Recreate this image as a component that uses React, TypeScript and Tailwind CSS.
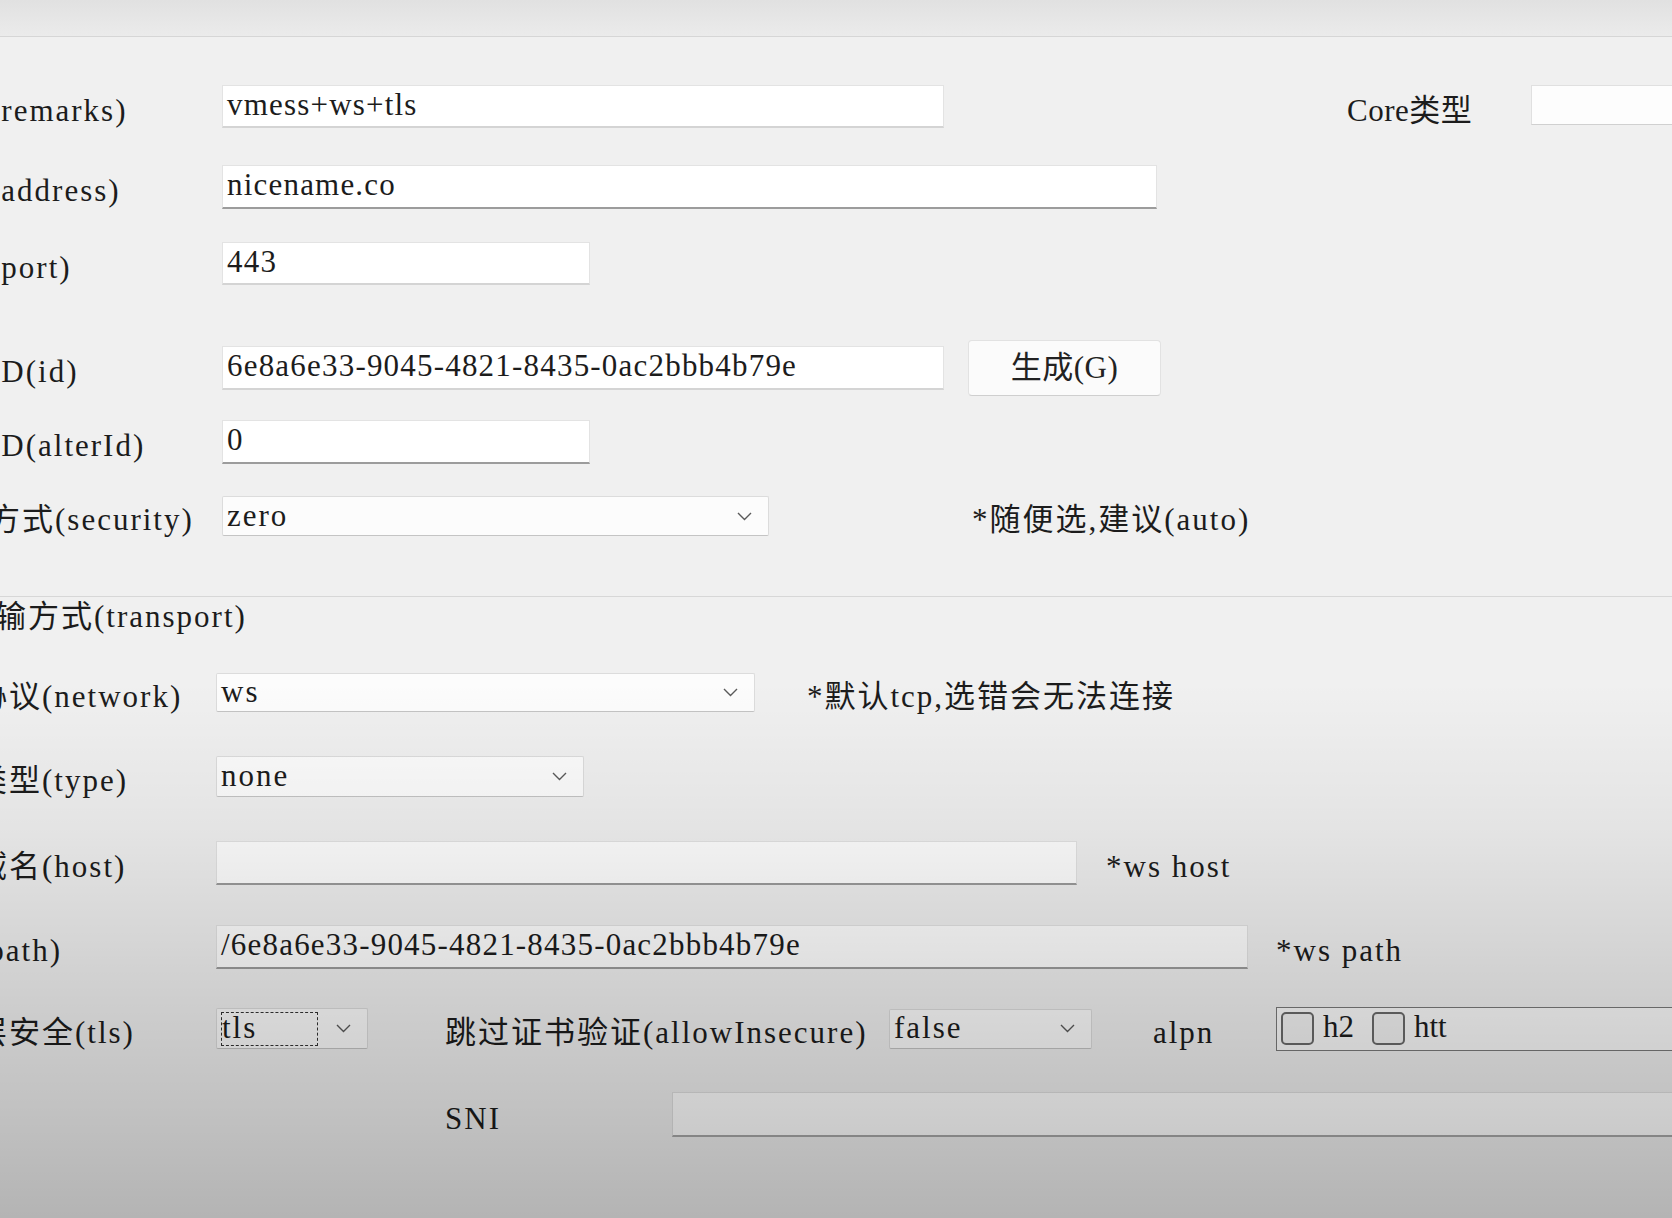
import type { ReactNode } from 'react'

// v2rayN style server editor, cropped at the left edge
const FONT = "font-['Liberation_Serif','Noto_Sans_CJK_SC',serif]"

function Chevron() {
  return (
    <svg width="15" height="9" viewBox="0 0 15 9" className="shrink-0">
      <polyline points="1,1 7.5,7.5 14,1" fill="none" stroke="#5a5a5a" strokeWidth="1.4" />
    </svg>
  )
}

function TextBox({ className, value, dark }: { className: string; value?: string; dark?: boolean }) {
  return (
    <div
      className={`${className} shrink-0 flex items-center bg-white border border-[#e3e3e3] pl-[4px] pb-[2px] tracking-[1.2px] whitespace-nowrap overflow-hidden ${
        dark ? 'border-b-2 border-b-[#9c9c9c]' : 'border-b-2 border-b-[#d4d4d4]'
      }`}
    >
      {value}
    </div>
  )
}

function Select({ className, value, focused }: { className: string; value: string; focused?: boolean }) {
  return (
    <div className={`${className} shrink-0 flex items-center justify-between bg-[#fcfcfc] border border-[#dcdcdc] border-b-[#c4c4c4] rounded-[2px] pl-[4px] pr-[16px]`}>
      {focused ? (
        <span className="border border-dashed border-[#333] h-[34px] w-[97px] flex items-center leading-none pb-[2px]">{value}</span>
      ) : (
        <span className="leading-none pb-[2px]">{value}</span>
      )}
      <Chevron />
    </div>
  )
}

function Label({ children, wide }: { children: ReactNode; wide?: boolean }) {
  return (
    <div className={`${wide ? 'w-[306px]' : 'w-[299px]'} shrink-0 pt-[8px] leading-[36px] whitespace-nowrap`}>
      {children}
    </div>
  )
}

function Checkbox({ label }: { label: string }) {
  return (
    <div className="flex items-center tracking-normal">
      <span className="w-[33px] h-[33px] rounded-[5px] border-2 border-[#6a6a6a] bg-[#f3f3f3]" />
      <span className="ml-[9px] leading-none pb-[4px]">{label}</span>
    </div>
  )
}

export default function App() {
  return (
    <div className={`relative w-[1672px] h-[1218px] overflow-hidden bg-[#f0f0f0] text-[#1c1c1c] text-[31px] tracking-[2px] ${FONT}`}>
      <div className="h-[37px] bg-gradient-to-b from-[#e1e1e1] to-[#ebebeb] border-b border-[#d6d6d6]" />

      {/* main fields */}
      <div className="ml-[-77px]">
        <div className="mt-[48px] h-[43px] flex items-center">
          <Label>别名(remarks)</Label>
          <TextBox className="w-[722px] h-[43px]" value="vmess+ws+tls" />
          <div className="ml-[403px] w-[184px] shrink-0 pt-[8px] leading-[36px] tracking-[0.5px] whitespace-nowrap">Core类型</div>
          <div className="w-[220px] h-[40px] shrink-0 mb-[4px] bg-[#fdfdfd] border border-[#e0e0e0] border-b-[#d0d0d0]" />
        </div>

        <div className="mt-[37px] h-[44px] flex items-center">
          <Label>地址(address)</Label>
          <TextBox className="w-[935px] h-[44px]" value="nicename.co" dark />
        </div>

        <div className="mt-[33px] h-[43px] flex items-center">
          <Label>端口(port)</Label>
          <TextBox className="w-[368px] h-[43px]" value="443" />
        </div>

        <div className="mt-[55px] h-[56px] flex items-center">
          <Label>用户ID(id)</Label>
          <TextBox className="w-[722px] h-[44px]" value="6e8a6e33-9045-4821-8435-0ac2bbb4b79e" />
          <button className="ml-[24px] w-[193px] h-[56px] shrink-0 bg-[#fbfbfb] border border-[#e2e2e2] border-b-[#cfcfcf] rounded-[4px] leading-none pb-[2px] tracking-[0.5px] text-[#222]">
            生成(G)
          </button>
        </div>

        <div className="mt-[24px] h-[44px] flex items-center">
          <Label>额外ID(alterId)</Label>
          <TextBox className="w-[368px] h-[44px]" value="0" dark />
        </div>

        <div className="mt-[32px] h-[40px] flex items-center">
          <Label>加密方式(security)</Label>
          <Select className="w-[547px] h-[40px]" value="zero" />
          <div className="ml-[203px] shrink-0 pt-[8px] leading-[36px] whitespace-nowrap">*随便选,建议(auto)</div>
        </div>
      </div>

      <div className="mt-[60px] h-px bg-[#d7d7d7]" />

      {/* transport group */}
      <div className="ml-[-38px] mt-[2px] leading-[36px] whitespace-nowrap">传输方式(transport)</div>

      <div className="ml-[-90px]">
        <div className="mt-[38px] h-[39px] flex items-center">
          <Label wide>传输协议(network)</Label>
          <Select className="w-[539px] h-[39px]" value="ws" />
          <div className="ml-[52px] shrink-0 pt-[8px] leading-[36px] whitespace-nowrap">*默认tcp,选错会无法连接</div>
        </div>

        <div className="mt-[44px] h-[41px] flex items-center">
          <Label wide>伪装类型(type)</Label>
          <Select className="w-[368px] h-[41px]" value="none" />
        </div>

        <div className="mt-[44px] h-[44px] flex items-center">
          <Label wide>伪装域名(host)</Label>
          <TextBox className="w-[861px] h-[44px]" dark />
          <div className="ml-[29px] shrink-0 pt-[8px] leading-[36px] whitespace-nowrap">*ws host</div>
        </div>

        <div className="mt-[40px] h-[44px] flex items-center">
          <Label wide>路径(path)</Label>
          <TextBox className="w-[1032px] h-[44px]" value="/6e8a6e33-9045-4821-8435-0ac2bbb4b79e" dark />
          <div className="ml-[28px] shrink-0 pt-[8px] leading-[36px] whitespace-nowrap">*ws path</div>
        </div>

        <div className="mt-[39px] h-[41px] flex items-center">
          <Label wide>传输层安全(tls)</Label>
          <Select className="w-[152px] h-[41px]" value="tls" focused />
          <div className="ml-[77px] w-[444px] shrink-0 pt-[8px] leading-[36px] whitespace-nowrap">跳过证书验证(allowInsecure)</div>
          <Select className="w-[203px] h-[40px]" value="false" />
          <div className="ml-[61px] w-[123px] shrink-0 pt-[8px] leading-[36px]">alpn</div>
          <div className="w-[420px] h-[44px] shrink-0 flex items-center gap-[18px] pl-[4px] bg-[#fafafa] border border-[#7a7a7a]">
            <Checkbox label="h2" />
            <Checkbox label="htt" />
          </div>
        </div>

        <div className="mt-[43px] h-[45px] flex items-center">
          <div className="w-[535px] shrink-0" />
          <div className="w-[227px] shrink-0 pt-[8px] leading-[36px]">SNI</div>
          <div className="w-[1100px] h-[45px] shrink-0 bg-white border border-[#e0e0e0] border-b-2 border-b-[#a8a8a8]" />
        </div>
      </div>

      {/* the photo darkens towards the bottom */}
      <div className="absolute inset-0 pointer-events-none bg-[linear-gradient(to_bottom,transparent_0%,transparent_56%,rgba(0,0,0,0.05)_68%,rgba(0,0,0,0.14)_82%,rgba(0,0,0,0.2)_92%,rgba(0,0,0,0.25)_100%)]" />
    </div>
  )
}
